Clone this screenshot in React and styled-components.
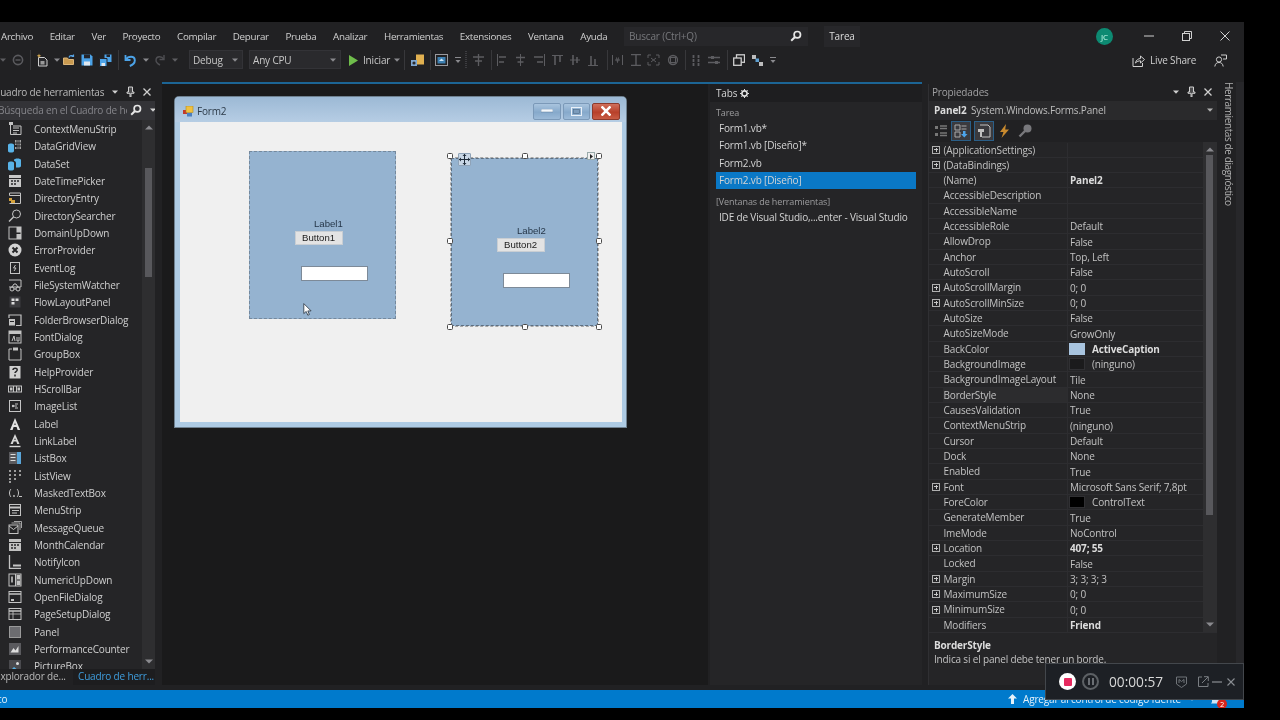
import React from 'react';
import styled, { createGlobalStyle } from 'styled-components';

const Global = createGlobalStyle`
  html, body { margin: 0; padding: 0; background: #000; }
  body { font-family: "Open Sans", "Noto Sans", sans-serif; font-size: 10px; color: #d4d4d4; }
  * { box-sizing: border-box; }
`;

const Screen = styled.div`
  position: relative; width: 1280px; height: 720px; background: #000; overflow: hidden;
  display: flex; flex-direction: column; filter: blur(0.3px);
`;
const TopGap = styled.div` height: 22px; flex: none; `;
const Win = styled.div`
  width: 1244px; height: 686px; flex: none; background: #212123;
  display: flex; flex-direction: column; letter-spacing: -0.17px;
`;

/* ---------- menu row ---------- */
const MenuRow = styled.div` height: 26px; flex: none; display: flex; align-items: center; padding-top: 2px; `;
const MenuItems = styled.div` display: flex; gap: 16.65px; padding-left: 1px; width: 624px; flex: none; font-size: 9.8px; letter-spacing: -0.3px; `;
const MenuItem = styled.span` color: #d0d0d0; white-space: nowrap; `;
const SearchBox = styled.div`
  width: 184px; height: 19px; background: #27272a; display: flex; align-items: center;
  justify-content: space-between; padding: 0 6px 0 5px; color: #77787c; flex: none;
`;
const TaskBox = styled.div`
  margin-left: 16px; width: 36px; height: 21px; background: #27272a; color: #dcdcdc;
  display: flex; align-items: center; justify-content: center; flex: none;
`;
const Avatar = styled.div`
  margin-left: 236px; width: 17px; height: 17px; border-radius: 50%; background: #0d8a72; color: #cfe;
  font-size: 8px; display: flex; align-items: center; justify-content: center; flex: none;
`;
const WinButtons = styled.div` display: flex; margin-left: 31px; gap: 28px; align-items: center; `;

/* ---------- tool row ---------- */
const ToolRow = styled.div` height: 34px; flex: none; display: flex; align-items: flex-start; padding-top: 2px; position: relative; `;
const Slot = styled.div`
  flex: none; height: 20px; margin-left: ${p => p.$ml}px; width: ${p => p.$w}px;
  display: flex; align-items: center; justify-content: center;
`;
const Sep = styled.div` flex: none; width: 1px; height: 20px; background: #38383b; margin-left: ${p => p.$ml}px; `;
const Combo = styled.div`
  flex: none; height: 19px; margin-left: ${p => p.$ml}px; width: ${p => p.$w}px;
  background: #2a2a2d; border: 1px solid #333337; display: flex; align-items: center;
  justify-content: space-between; padding: 0 4px 0 3px; color: #c8c8c8;
`;
const StartLabel = styled.span` flex: none; margin-left: ${p => p.$ml}px; width: ${p => p.$w}px; height: 20px; line-height: 20px; color: #c8c8c8; white-space: nowrap; `;
const LiveShare = styled.div`
  position: absolute; right: 0; top: 2px; height: 20px; width: 112px; display: flex; align-items: center; color: #cfcfcf;
`;
const LiveText = styled.span` margin-left: 5px; width: 49px; white-space: nowrap; `;
const LivePerson = styled.span` margin-left: 15px; display: flex; `;

/* ---------- main ---------- */
const Main = styled.div` flex: 1; min-height: 0; display: flex; padding-bottom: 5px; `;

const Toolbox = styled.section` width: 155px; flex: none; display: flex; flex-direction: column; background: #252527; margin-top: 2px; overflow: hidden; `;
const PaneTitle = styled.div`
  height: 17px; flex: none; display: flex; align-items: center; padding-bottom: 2px; background: #212123; color: #b9b9b9; overflow: hidden;
`;
const ClipLeft = styled.span` margin-left: ${p => p.$m}px; white-space: nowrap; flex: none; width: ${p => p.$w}px; overflow: hidden; `;
const PaneIcons = styled.span` display: flex; align-items: center; gap: 8px; margin-left: ${p => p.$m}px; flex: none; `;
const ToolSearch = styled.div` height: 19px; flex: none; display: flex; align-items: center; padding-bottom: 1px; background: #333337; color: #85858a; overflow: hidden; `;
const ToolBody = styled.div` flex: 1; min-height: 0; display: flex; overflow: hidden; `;
const ToolList = styled.div` flex: 1; min-width: 0; overflow: hidden; padding-top: 0.4px; `;
const ToolRowItem = styled.div` height: 17.33px; display: flex; align-items: center; padding-left: 8px; color: #cfcfcf; white-space: nowrap; `;
const ToolGlyph = styled.span` width: 14px; height: 14px; flex: none; margin-right: 12px; display: flex; `;
const Track = styled.div` width: 13px; flex: none; background: #2e2e30; display: flex; flex-direction: column; align-items: center; justify-content: space-between; padding: 5px 0; position: relative; `;
const Thumb = styled.div` position: absolute; left: 3px; width: 7px; top: ${p => p.$top}px; height: ${p => p.$h}px; background: #58585c; `;
const ToolTabs = styled.div` height: 16px; flex: none; display: flex; background: #212123; `;
const ToolTab = styled.div`
  height: 16px; line-height: 15px; flex: none; white-space: nowrap; overflow: hidden;
  width: ${p => p.$w}px; padding-left: ${p => p.$pl}px; margin-left: ${p => p.$ml}px;
  color: ${p => (p.$active ? '#3f9ede' : '#b8b8b8')}; background: ${p => (p.$active ? '#1d1d1f' : 'transparent')};
`;

const DocWell = styled.div` margin-left: 7px; width: 760px; flex: none; display: flex; border-top: 2px solid #1c6595; `;
const Designer = styled.div` position: relative; width: 546px; flex: none; background: #1a1a1b; `;

const FormWin = styled.div`
  position: absolute; left: 13px; top: 13px; width: 451px; height: 330px; border-radius: 4px 4px 0 0;
  background: #aecbe4; box-shadow: 0 0 0 1px #6f8190; display: flex; flex-direction: column; padding: 0 4px 5px 5px;
`;
const FormBar = styled.div`
  height: 25px; flex: none; margin: 0 -4px 0 -5px; padding: 3px 6px 0 8px; display: flex; align-items: center; border-radius: 4px 4px 0 0;
  background: linear-gradient(#9cb9d5, #b6cde4); color: #2c3a48;
`;
const FormTitle = styled.span` margin-left: 3px; flex: 1; font-size: 10px; `;
const Cap = styled.div`
  width: ${p => p.$w}px; height: 17px; margin-left: 2px; border-radius: 2px; display: flex; align-items: center; justify-content: center;
  border: 1px solid ${p => (p.$close ? '#8c3a2c' : '#7b99b8')};
  background: ${p => (p.$close ? 'linear-gradient(#d0705c, #b8402a 55%, #c85c44)' : 'linear-gradient(#a9c4de, #86a9cb 55%, #9cbad8)')};
`;
const Client = styled.div` flex: 1; background: #f0f0f0; position: relative; `;
const WinPanel = styled.div`
  position: absolute; left: ${p => p.$x}px; top: ${p => p.$y}px; width: ${p => p.$w}px; height: ${p => p.$h}px;
  background: #95b3d0; border: 1px dashed ${p => (p.$sel ? '#5e6f80' : '#74889c')};
  ${p => p.$sel && 'outline: 1px dashed #a8a8a8;'}
`;
const WinLabel = styled.span` position: absolute; left: ${p => p.$x}px; top: ${p => p.$y}px; color: #253648; font-family: "Liberation Sans", sans-serif; font-size: 9.6px; line-height: 12px; letter-spacing: 0; `;
const WinButton = styled.div`
  position: absolute; left: ${p => p.$x}px; top: ${p => p.$y}px; width: 48px; height: 14px; background: #e3e3e3; border: 1px solid #c9ced3;
  color: #222; font-family: "Liberation Sans", sans-serif; font-size: 9.6px; line-height: 12px; padding-left: 6px; letter-spacing: 0;
`;
const WinInput = styled.div`
  position: absolute; left: ${p => p.$x}px; top: ${p => p.$y}px; width: 67px; height: 15px; background: #fff; border: 1px solid #7d8a98;
`;
const Handle = styled.div`
  position: absolute; left: ${p => p.$x - 3}px; top: ${p => p.$y - 3}px; width: 6px; height: 6px; background: #fff; border: 1px solid #4a4a4a; border-radius: 1.5px;
`;
const MoveGlyph = styled.div`
  position: absolute; left: 278px; top: 31px; width: 13px; height: 13px; background: #c9d7e6; border: 1px solid #8fa3b8; border-radius: 1px; display: flex;
`;
const SmartTag = styled.div`
  position: absolute; left: 407px; top: 30px; width: 8px; height: 8px; background: #eee; border: 1px solid #9aa; display: flex; align-items: center; justify-content: center;
`;
const Pointer = styled.div` position: absolute; left: 123px; top: 181px; display: flex; `;

/* tabs pane */
const TabsPane = styled.section` margin-left: 2px; width: 212px; flex: none; background: #252527; display: flex; flex-direction: column; `;
const TabsHead = styled.div` height: 18px; flex: none; background: #1e1e20; display: flex; align-items: center; padding-left: 6px; gap: 3px; color: #d4d4d4; `;
const TabsBody = styled.div` padding: 4px 6px 0; display: flex; flex-direction: column; `;
const GroupHead = styled.div` height: 14px; line-height: 14px; color: #9d9d9f; font-size: 9px; margin-top: ${p => p.$mt || 0}px; letter-spacing: -0.1px; `;
const TabRow = styled.div`
  height: 17.3px; line-height: 16.5px; padding-left: 3px; white-space: nowrap; color: #d4d4d4;
  background: ${p => (p.$sel ? '#0a78c6' : 'transparent')};
`;

/* properties */
const Props = styled.section` margin-left: 6px; width: 289px; flex: none; display: flex; flex-direction: column; background: #252527; margin-top: 2px; border-left: 1px solid #303033; `;
const PropTitle = styled.div` height: 17px; flex: none; display: flex; align-items: center; padding: 0 5px 2px 3px; background: #212123; color: #a0a0a2; `;
const Grip = styled.span`
  flex: 1; height: 5px; margin: 0 8px 0 5px;
  background-image: radial-gradient(#38383b 40%, transparent 45%); background-size: 2px 2px;
`;
const PropObject = styled.div` height: 19px; flex: none; display: flex; align-items: center; padding: 0 4px 1px 5px; color: #bdbdbd; background: #2a2a2c; `;
const Bold = styled.b` font-weight: 700; color: #dcdcdc; width: 37px; flex: none; `;
const ObjectName = styled.span` flex: 1; `;
const PropTools = styled.div` height: 22px; flex: none; display: flex; align-items: center; padding-left: 2px; background: #212123; gap: 0; `;
const PropTool = styled.span`
  width: 20px; height: 20px; display: flex; align-items: center; justify-content: center; margin-right: ${p => p.$mr ?? 1}px;
  border: 1px solid ${p => (p.$on ? '#2b5f88' : 'transparent')}; background: ${p => (p.$on ? '#3a3a3e' : 'transparent')};
`;
const PropBody = styled.div` flex: 1; min-height: 0; display: flex; `;
const PropGrid = styled.div` flex: 1; min-width: 0; overflow: hidden; background: #252527; padding-top: .5px; `;
const PropRowEl = styled.div`
  height: 15.34px; display: grid; grid-template-columns: 14px 124px 1fr; align-items: center; border-bottom: 1px solid #2d2d30; color: #c2c2c2; white-space: nowrap;
  line-height: 14px;
`;
const Expander = styled.span`
  width: 8px; height: 8px; margin-left: 3px; border: 1px solid #b0b0b0; position: relative; display: block;
  &::before { content: ''; position: absolute; left: 1px; right: 1px; top: 2.5px; height: 1px; background: #c8c8c8; }
  &::after { content: ''; position: absolute; top: 1px; bottom: 1px; left: 2.5px; width: 1px; background: #c8c8c8; }
`;
const PropName = styled.span` padding-left: .5px; height: 100%; line-height: 14px; background: ${p => (p.$sel ? '#2c2c2e' : 'transparent')}; `;
const PropValue = styled.span` padding-left: 2px; display: flex; align-items: center; font-weight: ${p => (p.$b ? 700 : 400)}; color: ${p => (p.$b ? '#dcdcdc' : '#c2c2c2')}; border-left: 1px solid #2d2d30; height: 100%; `;
const Swatch = styled.i` width: 16px; height: 12px; margin: 0 7px 0 -1px; flex: none; background: ${p => p.$c}; border: 1px solid ${p => (p.$c === '#a8c4df' ? '#a8c4df' : '#303033')}; `;
const PropBar = styled.div` width: 14px; flex: none; background: #2e2e30; display: flex; flex-direction: column; align-items: center; justify-content: space-between; padding: 5px 0; position: relative; `;
const PropDesc = styled.div` height: 53px; flex: none; padding: 5px 5px 0; background: #252527; border-top: 1px solid #2d2d30; line-height: 14px; color: #c2c2c2; `;
const DescTitle = styled.div` font-weight: 700; color: #dcdcdc; `;

const Strip = styled.div` width: 27px; flex: none; display: flex; padding-left: 5px; background: #212123; box-shadow: inset -8px 0 0 #27272a; `;
const StripText = styled.span` writing-mode: vertical-rl; color: #b0b0b0; white-space: nowrap; line-height: 14px; height: 130px; letter-spacing: -0.4px; `;

/* status bar */
const Status = styled.div` height: 18px; flex: none; background: #007acc; color: #e4f1fa; display: flex; align-items: center; position: relative; overflow: hidden; `;
const StatusLeft = styled.span` margin-left: -14px; width: 1022px; flex: none; white-space: nowrap; `;
const StatusRight = styled.span` margin-left: 6px; width: 166px; flex: none; white-space: nowrap; `;
const StatusBell = styled.span` margin-left: 15px; display: flex; `;
const Badge = styled.span`
  position: absolute; right: 17px; bottom: -1px; width: 10px; height: 10px; background: #d8261c; border-radius: 50%; font-size: 7.5px; line-height: 10px; text-align: center; color: #fff;
`;

/* recorder overlay */
const Recorder = styled.div`
  position: absolute; left: 1045px; top: 663px; width: 199px; height: 37px; background: #1d2025; border: 1px solid #43474c;
  display: flex; align-items: center; padding-left: 13px; letter-spacing: 0;
`;
const RecBtn = styled.div` width: 17px; height: 17px; border-radius: 50%; background: #fff; display: flex; align-items: center; justify-content: center; flex: none; `;
const RecSquare = styled.i` width: 8px; height: 8px; background: #e62a5f; border-radius: 1px; `;
const RecPause = styled.div` margin-left: 6px; width: 17px; height: 17px; border-radius: 50%; border: 2px solid #5d6165; display: flex; align-items: center; justify-content: center; gap: 2px; flex: none; `;
const PauseBar = styled.i` width: 2px; height: 7px; background: #6b6f74; `;
const RecTime = styled.span` margin-left: 10px; width: 61px; font-size: 13.7px; color: #d9d9d9; flex: none; white-space: nowrap; `;
const RecIcons = styled.span` display: flex; align-items: center; margin-left: ${p => p.$m}px; flex: none; `;

/* ---------- icons ---------- */
const S = ({ w = 14, h = 14, vb, children, ...r }) => (
  <svg width={w} height={h} viewBox={vb || `0 0 ${w} ${h}`} fill="none" {...r}>{children}</svg>
);
const Caret = ({ c = '#8a8a8e' }) => <S w={6} h={4}><path d="M0 .5h6L3 3.8z" fill={c} /></S>;
const ScrollArrow = ({ up }) => <S w={8} h={5}><path d={up ? 'M0 4.500h8L4 .5z' : 'M0 .5h8L4 4.500z'} fill="#8a8a8e" /></S>;
const Pin = () => <S w={9} h={11}><path d="M2.5 1h4v5h1.5v1.3H5V11H4V7.3H1V6h1.5z" stroke="#d0d0d0" strokeWidth="1" fill="#d0d0d0" fillOpacity=".25" /></S>;
const XMark = ({ c = '#d0d0d0', s = 8, sw = 1.3 }) => <S w={s} h={s}><path d={`M.5.5L${s - .5} ${s - .5}M${s - .5} .5L.5 ${s - .5}`} stroke={c} strokeWidth={sw} /></S>;
const Lens = ({ c = '#e6e6e6' }) => <S w={12} h={12}><circle cx="7.3" cy="4.7" r="3.2" stroke={c} strokeWidth="1.7" /><path d="M5 7L1.2 10.8" stroke={c} strokeWidth="2" /></S>;

const dim = '#5c5c60';
const tb = {
  caret: <Caret />,
  caretDim: <Caret c="#5e5e62" />,
  back: <S w={12} h={12}><circle cx="6" cy="6" r="4.6" stroke="#5a5a5e" strokeWidth="1.6" /><path d="M3.5 6h5" stroke="#5a5a5e" strokeWidth="1.4" /></S>,
  fresh: <S w={13} h={14}><path d="M2.5 4.5h6l2.5 2.5v6h-8.5z" stroke="#cfcfcf" fill="#2a2a2d" /><path d="M3 .5l.6 1.7 1.7.6-1.7.6L3 5.1l-.6-1.7L.7 2.8l1.7-.6z" fill="#e0b050" /><rect x="4.5" y="8" width="4" height="3.5" fill="#9a9a9a" /></S>,
  open: <S w={13} h={12}><path d="M.5 10.5V4h4l1 1.5h5v5z" stroke="#dcb67a" fill="#c99a50" /><path d="M6 3.5C6.5 1.5 9 1 10.5 2M10.5 .5V2.5H8.5" stroke="#5aa5e6" strokeWidth="1.2" /></S>,
  save: <S w={12} h={12}><path d="M.5.5h9l2 2v9H.5z" fill="#4ca3e8" /><rect x="3" y=".5" width="6" height="3.8" fill="#23242a" /><rect x="3" y="7.5" width="6" height="4" fill="#dfe7ee" /></S>,
  saveAll: <S w={13} h={13}><path d="M5.5.5h7v7.5h-7z" fill="#4ca3e8" /><rect x="7.5" y=".5" width="3.5" height="2.5" fill="#23242a" /><path d="M.5 4.5h7.5v8H.5z" fill="#4ca3e8" stroke="#23242a" /><rect x="2.5" y="9" width="3.5" height="3" fill="#dfe7ee" /></S>,
  undo: <S w={12} h={13}><path d="M1.5 1v5h5" stroke="#4ca3e8" strokeWidth="1.8" fill="none" /><path d="M2 5.5C4 2 10.5 1.5 10.8 6c.2 3-2.5 5-5 6" stroke="#4ca3e8" strokeWidth="1.9" fill="none" /></S>,
  redo: <S w={10} h={12}><path d="M9 1v4.5H4.5" stroke="#4e4e52" strokeWidth="1.4" /><path d="M8.5 5C7 2 1.2 1.8 1 6c-.1 2.6 2 4 4 5" stroke="#4e4e52" strokeWidth="1.4" /></S>,
  play: <S w={9} h={11}><path d="M0 0l9 5.5L0 11z" fill="#6fbd4b" /></S>,
  attach: <S w={15} h={13}><rect x="6" y=".5" width="8" height="10" fill="#e0b050" /><path d="M1 6h6v6H1z" fill="#7ea6cf" /><circle cx="4" cy="9" r="1.6" fill="#2a2a2d" /></S>,
  form: <S w={13} h={12}><rect x=".5" y=".5" width="12" height="11" stroke="#9a9a9e" /><rect x="2.5" y="3" width="8" height="6.5" fill="#3c7fb0" /><path d="M4 7l2.5-2.5L9 7z" fill="#cfe5f5" /></S>,
  more: <S w={6} h={7}><path d="M0 .5h6" stroke="#8a8a8e" /><path d="M.5 3h5L3 6z" fill="#8a8a8e" /></S>,
  grip: <S w={3} h={18}><path d="M1 0v18" stroke="#3c3c40" strokeDasharray="1 1" strokeWidth="2" /></S>,
  a0: <S w={11} h={12}><path d="M5.5 0v12M0 3h11M2 7h7" stroke={dim} strokeWidth="1.3" /></S>,
  a1: <S w={10} h={12}><path d="M.5 0v12" stroke={dim} /><path d="M2 3h7M2 8h5" stroke={dim} strokeWidth="1.6" /></S>,
  a2: <S w={9} h={12}><path d="M4.5 0v12" stroke={dim} /><path d="M0 3.5h9M1.5 8h6" stroke={dim} strokeWidth="1.6" /></S>,
  a3: <S w={12} h={12}><path d="M11.5 0v12" stroke={dim} /><path d="M1 3h9M4 8h6" stroke={dim} strokeWidth="1.6" /></S>,
  a4: <S w={11} h={11}><path d="M0 .5h11" stroke={dim} /><path d="M3 1v9M8 1v6" stroke={dim} strokeWidth="1.6" /></S>,
  a5: <S w={10} h={10}><path d="M0 5h10" stroke={dim} /><path d="M3 0v10M7 2v6" stroke={dim} strokeWidth="1.6" /></S>,
  a6: <S w={10} h={12}><path d="M0 11.5h10" stroke={dim} /><path d="M3 2v9M7 5v6" stroke={dim} strokeWidth="1.6" /></S>,
  s0: <S w={11} h={10}><path d="M.5 0v10M10.5 0v10" stroke={dim} /><path d="M3 5h5M4.5 2.5l1 5M6.5 2.5l-1 5" stroke={dim} /></S>,
  s1: <S w={12} h={12}><path d="M1 .5h10M1 11.5h10M6 .5v11" stroke={dim} strokeWidth="1.4" /></S>,
  s2: <S w={13} h={12}><path d="M1 4V1h3M9 1h3v3M12 8v3H9M4 11H1V8" stroke={dim} /><path d="M4 4l5 4M9 4L4 8" stroke={dim} /></S>,
  s3: <S w={12} h={12}><circle cx="6" cy="6" r="4.5" stroke={dim} strokeWidth="1.3" /><rect x="3.5" y="3.5" width="5" height="5" stroke={dim} /></S>,
  g0: <S w={8} h={11}><path d="M1.5 0v11M6.5 0v11" stroke={dim} strokeWidth="1.8" strokeDasharray="3 1" /></S>,
  g1: <S w={12} h={10}><path d="M0 2.5h12M0 7.5h12" stroke={dim} strokeWidth="1.3" /><rect x="3" y="1" width="3" height="3" fill={dim} /><rect x="7" y="6" width="3" height="3" fill={dim} /></S>,
  tab: <S w={12} h={12}><rect x="3.5" y=".8" width="8" height="7.5" stroke="#cfcfcf" strokeWidth="1.3" /><rect x=".7" y="4" width="7.5" height="7.3" stroke="#cfcfcf" strokeWidth="1.3" fill="#212123" /></S>,
  order: <S w={11} h={11}><rect x="0" y="0" width="4" height="4" fill="#bdbdbd" /><rect x="3.5" y="3.5" width="3.5" height="3.5" fill="#5e9fd0" /><rect x="7" y="7" width="4" height="4" fill="#bdbdbd" /></S>,
};
const toolbarItems = [
  ['i', 'caretDim', 0, 6], ['i', 'back', 12, 12], ['s', 30], ['i', 'fresh', 36, 13], ['i', 'caret', 54, 6], ['i', 'open', 63, 13],
  ['i', 'save', 81, 12], ['i', 'saveAll', 99, 13], ['s', 118], ['i', 'undo', 124, 12], ['i', 'caret', 143, 6], ['i', 'redo', 155, 10],
  ['i', 'caretDim', 172, 6], ['c', 'Debug', 189, 54], ['c', 'Any CPU', 249, 92], ['i', 'play', 349, 9], ['t', 'Iniciar', 363, 30],
  ['i', 'caret', 394, 6], ['s', 404], ['i', 'attach', 410, 15], ['s', 430], ['i', 'form', 435, 13], ['i', 'more', 455, 6], ['i', 'grip', 465, 3],
  ['i', 'a0', 473, 11], ['s', 491], ['i', 'a1', 497, 10], ['i', 'a2', 516, 9], ['i', 'a3', 533, 12], ['i', 'a4', 552, 11], ['i', 'a5', 570, 10],
  ['i', 'a6', 588, 10], ['s', 607], ['i', 's0', 612, 11], ['i', 's1', 630, 12], ['i', 's2', 647, 13], ['i', 's3', 667, 12], ['s', 685],
  ['i', 'g0', 692, 8], ['i', 'g1', 708, 12], ['s', 727], ['i', 'tab', 733, 12], ['i', 'order', 752, 11], ['i', 'more', 770, 6],
];
function Toolbar() {
  let right = 0;
  const out = [];
  toolbarItems.forEach((it, n) => {
    const kind = it[0];
    if (kind === 's') { out.push(<Sep key={n} $ml={it[1] - right} />); right = it[1] + 1; return; }
    const left = it[2]; const w = it[3]; const ml = left - right;
    if (kind === 'i') out.push(<Slot key={n} $ml={ml} $w={w}>{tb[it[1]]}</Slot>);
    if (kind === 'c') out.push(<Combo key={n} $ml={ml} $w={w}><span>{it[1]}</span><Caret /></Combo>);
    if (kind === 't') out.push(<StartLabel key={n} $ml={ml} $w={w}>{it[1]}</StartLabel>);
    right = left + w;
  });
  return out;
}

const g = '#c4c4c4';
const B = ({ children }) => <S w={14} h={14}>{children}</S>;
const glyphs = {
  ContextMenuStrip: <B><path d="M2.5 2v10.5H13V4H5" stroke={g} /><path d="M5 6h6M5 8.5h6M5 11h4" stroke={g} /><rect x="1" y="0" width="4" height="3" fill={g} /></B>,
  DataGridView: <B><path d="M0 6c0-2 6-2 6 0v6c0 2-6 2-6 0z" fill="#58b3e8" /><path d="M7 1h6v9H7V8h2V6H7z" fill="#d8d8d8" fillOpacity=".7" /><path d="M9 1v9M11 1v9M7 4h6M7 7h6" stroke="#252527" /></B>,
  DataSet: <B><path d="M0 6c0-2 6-2 6 0v6c0 2-6 2-6 0z" fill="#58b3e8" /><path d="M6 3c0-2 7-2 7 0v6c0 1.5-3 1.8-5 1.5V6c0-1-1-2-2-2.2z" fill="#58b3e8" /></B>,
  DateTimePicker: <B><rect x="1" y="1" width="12" height="12" fill="#c8c8c8" /><path d="M1 4.5h12" stroke="#252527" /><path d="M3 7h2M6 7h2M9 7h2M3 10h2M6 10h2" stroke="#252527" strokeWidth="1.4" /></B>,
  DirectoryEntry: <B><path d="M1.5 2h11v10.5H1.5" stroke={g} /><path d="M1.5 2v2.5h11" stroke={g} /><path d="M1 7h3v2h3v3H3v-2H1z" fill="#d5a23c" /></B>,
  DirectorySearcher: <B><circle cx="8.5" cy="5" r="4" stroke={g} /><path d="M5.5 8L1 12.5" stroke={g} strokeWidth="1.5" /></B>,
  DomainUpDown: <B><rect x="1" y="1" width="12" height="12" stroke={g} /><rect x="8.5" y="1" width="4.5" height="5.5" fill={g} /><rect x="8.5" y="8" width="4.5" height="5" fill={g} /></B>,
  ErrorProvider: <B><circle cx="7" cy="7" r="6.5" fill="#d2d2d2" /><path d="M4.5 4.5l5 5M9.5 4.5l-5 5" stroke="#252527" strokeWidth="2" /></B>,
  EventLog: <B><rect x="2.5" y="1.5" width="9" height="11" stroke={g} /><path d="M7.5 4L5.5 7H8l-2 3" stroke={g} /></B>,
  FileSystemWatcher: <B><path d="M1 2h12v7H1" stroke={g} /><circle cx="4" cy="11" r="2" stroke={g} /><circle cx="10" cy="11" r="2" stroke={g} /><path d="M6 11h2M4 9l2-3h2l2 3" stroke={g} /></B>,
  FlowLayoutPanel: <B><rect x="1.5" y="1.5" width="11" height="11" fill="#3d3d40" /><rect x="3.5" y="3.5" width="3" height="2.5" fill="#ddd" /><rect x="7.5" y="3.5" width="3" height="2.5" fill="#ddd" /><rect x="3.5" y="7" width="3" height="2.5" fill="#ddd" /></B>,
  FolderBrowserDialog: <B><path d="M1 5V2h12v10.5H8" stroke={g} strokeWidth="1.2" /><path d="M1 6h6v6.5H1z" fill={g} /><path d="M2 8.5h4" stroke="#252527" /></B>,
  FontDialog: <B><rect x="1" y="1" width="12" height="12" stroke={g} /><rect x="1" y="1" width="12" height="3" fill={g} /><path d="M4 11l2-5 1 5M9 7v4h2V7" stroke={g} /></B>,
  GroupBox: <B><path d="M4 2H1v11h12V2h-1" stroke={g} /><path d="M5 .5h5v3H5z" fill={g} /></B>,
  HelpProvider: <B><rect x="1.5" y="1" width="11" height="12.5" fill="#d0d0d0" /><path d="M5 5c0-2.5 4.5-2.5 4.2 0 0 1.5-2.2 1.6-2.2 3M7 9.5v2" stroke="#252527" strokeWidth="1.5" /></B>,
  HScrollBar: <B><rect x="0.5" y="4" width="13" height="6" stroke={g} /><rect x="2" y="5.5" width="2.5" height="3" fill={g} /><rect x="9.5" y="5.5" width="2.5" height="3" fill={g} /><path d="M5.5 4v6M8.5 4v6" stroke={g} /></B>,
  ImageList: <B><rect x="1.5" y="1.5" width="11" height="11" stroke={g} /><circle cx="5" cy="7" r="1.2" fill={g} /><path d="M7 5h3M7 9h3M6 7h3" stroke={g} /></B>,
  Label: <B><path d="M7 1l-5 12h2.6l1-3h3l1 3h2.6zM6.3 8L7 5.5 7.7 8z" fill="#e2e2e2" /></B>,
  LinkLabel: <B><path d="M7 0l-4.5 10h2.3l.9-2.5h2.6l.9 2.5h2.3zM6.3 6L7 4l.7 2z" fill="#d8d8d8" /><path d="M1.5 12.5h11" stroke="#d8d8d8" strokeWidth="1.4" /></B>,
  ListBox: <B><rect x="1" y="1" width="12" height="12" fill="#5a5a5e" /><path d="M2.5 3.5h5M2.5 6.5h5M2.5 9.5h5" stroke="#ddd" /><rect x="9" y="1" width="4" height="12" fill="#5aa5d8" /></B>,
  ListView: <B><path d="M1 2h3M6 2h3M11 2h2M1 6h3M6 6h3M11 6h2M1 10h3M6 10h3M1 13h3" stroke={g} strokeWidth="1.6" strokeDasharray="2 1" /></B>,
  MaskedTextBox: <B><path d="M3 3C1 5 1 9 3 11M9 3c2 2 2 6 0 8" stroke={g} /><circle cx="6" cy="10" r=".9" fill={g} /><path d="M11 10.5h3" stroke={g} /></B>,
  MenuStrip: <B><rect x="1.5" y="1.5" width="11" height="11" stroke={g} /><path d="M1.5 4.5h11" stroke={g} strokeWidth="2" /><path d="M4 7.5h7M4 10h5" stroke={g} /></B>,
  MessageQueue: <B><rect x="1" y="4" width="9" height="8.5" stroke={g} /><path d="M1 5l4.5 3.5L10 5" stroke={g} /><path d="M3.5 2h8.5v7M6 0.5h7.5V7" stroke={g} strokeWidth=".8" /></B>,
  MonthCalendar: <B><rect x="1" y="1" width="12" height="12" fill="#c0c0c0" /><path d="M1 4.5h12" stroke="#252527" /><path d="M3 7h2M6 7h2M9 7h2M3 10h2M6 10h2" stroke="#252527" strokeWidth="1.4" /></B>,
  NotifyIcon: <B><path d="M1.5 0v13.5H13" stroke={g} strokeWidth="1.3" /><rect x="5" y="9.5" width="8" height="2" fill={g} /></B>,
  NumericUpDown: <B><rect x="1" y="1" width="12" height="12" stroke={g} /><path d="M7.5 1v12M7.5 7h5.5" stroke={g} /><path d="M4 3.5v6" stroke={g} strokeWidth="1.6" /><rect x="8.5" y="2" width="4" height="4" fill={g} /><rect x="8.5" y="8" width="4" height="4" fill={g} /></B>,
  OpenFileDialog: <B><rect x="1" y="1.5" width="12" height="11" stroke={g} /><path d="M1 4h12" stroke={g} strokeWidth="1.5" /><path d="M3 9h3v2H3z" fill={g} /></B>,
  PageSetupDialog: <B><rect x="1" y="1.5" width="12" height="11" stroke={g} /><path d="M1 4h12" stroke={g} strokeWidth="1.5" /><path d="M1 7h12M5 4v8" stroke={g} strokeWidth=".8" /></B>,
  Panel: <B><rect x="1.5" y="1.5" width="11" height="11" fill="#6c6c70" stroke="#9a9a9a" /></B>,
  PerformanceCounter: <B><rect x="1" y="1" width="12" height="12" fill="#5a5a5e" /><path d="M2.5 10.5L5.5 6l2 2.5 3-4.5v6.5z" fill="#ddd" /></B>,
  PictureBox: <B><rect x="1" y="1" width="12" height="12" fill="#4a4a4e" /><path d="M2 12l4-4 5 4z" fill="#58b3e8" /><circle cx="9.5" cy="4.5" r="1.5" fill="#ddd" /></B>,
};
const tools = Object.keys(glyphs);

const props = [
  ['(ApplicationSettings)', '', 1], ['(DataBindings)', '', 1], ['(Name)', 'Panel2', 0, 'b'], ['AccessibleDescription', ''], ['AccessibleName', ''],
  ['AccessibleRole', 'Default'], ['AllowDrop', 'False'], ['Anchor', 'Top, Left'], ['AutoScroll', 'False'], ['AutoScrollMargin', '0; 0', 1],
  ['AutoScrollMinSize', '0; 0', 1], ['AutoSize', 'False'], ['AutoSizeMode', 'GrowOnly'], ['BackColor', 'ActiveCaption', 0, 'b', '#a8c4df'],
  ['BackgroundImage', '(ninguno)', 0, '', '#1b1b1c'], ['BackgroundImageLayout', 'Tile'], ['BorderStyle', 'None', 0, 'sel'], ['CausesValidation', 'True'],
  ['ContextMenuStrip', '(ninguno)'], ['Cursor', 'Default'], ['Dock', 'None'], ['Enabled', 'True'], ['Font', 'Microsoft Sans Serif; 7,8pt', 1],
  ['ForeColor', 'ControlText', 0, '', '#000'], ['GenerateMember', 'True'], ['ImeMode', 'NoControl'], ['Location', '407; 55', 1, 'b'], ['Locked', 'False'],
  ['Margin', '3; 3; 3; 3', 1], ['MaximumSize', '0; 0', 1], ['MinimumSize', '0; 0', 1], ['Modifiers', 'Friend', 0, 'b'],
];
const menu = ['Archivo', 'Editar', 'Ver', 'Proyecto', 'Compilar', 'Depurar', 'Prueba', 'Analizar', 'Herramientas', 'Extensiones', 'Ventana', 'Ayuda'];
const handles = [[270, 34], [345, 34], [419, 34], [270, 119], [419, 119], [270, 205], [345, 205], [419, 205]];

function FormDesigner() {
  return (
    <FormWin>
      <FormBar>
        <S w={11} h={11}><rect x="0" y="4" width="4" height="4" fill="#c0392b" /><rect x="3" y="0" width="7" height="6.5" fill="#f0c040" stroke="#b08a20" strokeWidth=".6" /><rect x="4" y="7" width="5" height="3.5" fill="#4a7fc0" /></S>
        <FormTitle>Form2</FormTitle>
        <Cap $w={28}><S w={12} h={4}><rect width="12" height="3" fill="#f4f8fc" stroke="#5d7c9a" strokeWidth=".5" /></S></Cap>
        <Cap $w={27}><S w={11} h={9}><rect x=".5" y=".5" width="10" height="8" stroke="#e8f0f8" fill="none" /><rect x="2.5" y="2.5" width="6" height="4" fill="#7c9cbc" stroke="#4e6a86" strokeWidth=".6" /></S></Cap>
        <Cap $w={28} $close><XMark c="#fff" s={10} sw={2.6} /></Cap>
      </FormBar>
      <Client>
        <WinPanel $x={69} $y={29} $w={147} $h={168}>
          <WinLabel $x={64} $y={65.5}>Label1</WinLabel>
          <WinButton $x={45} $y={79}>Button1</WinButton>
          <WinInput $x={51} $y={114} />
        </WinPanel>
        <WinPanel $sel $x={271} $y={36} $w={147} $h={168}>
          <WinLabel $x={65} $y={65.5}>Label2</WinLabel>
          <WinButton $x={45} $y={79}>Button2</WinButton>
          <WinInput $x={51} $y={114} />
        </WinPanel>
        {handles.map(([x, y]) => <Handle key={`${x}-${y}`} $x={x} $y={y} />)}
        <MoveGlyph>
          <S w={11} h={11}><path d="M5.5 0v11M0 5.5h11" stroke="#1f2c3a" /><path d="M5.5 0l-2 2h4zM5.5 11l-2-2h4zM0 5.5l2-2v4zM11 5.5l-2-2v4z" fill="#1f2c3a" /></S>
        </MoveGlyph>
        <SmartTag><S w={3} h={5}><path d="M0 0l3 2.5L0 5z" fill="#222" /></S></SmartTag>
        <Pointer>
          <S w={9} h={13}><path d="M.8.6v10l2.4-2.2 1.6 3.8 1.6-.7-1.6-3.6h3.3z" fill="#fff" stroke="#24303c" strokeWidth=".8" /></S>
        </Pointer>
      </Client>
    </FormWin>
  );
}

export default function App() {
  return (
    <>
      <Global />
      <Screen>
        <TopGap />
        <Win>
          <MenuRow>
            <MenuItems>{menu.map(m => <MenuItem key={m}>{m}</MenuItem>)}</MenuItems>
            <SearchBox><span>Buscar (Ctrl+Q)</span><Lens /></SearchBox>
            <TaskBox>Tarea</TaskBox>
            <Avatar>JC</Avatar>
            <WinButtons>
              <S w={10} h={10}><path d="M0 5h10" stroke="#d0d0d0" /></S>
              <S w={10} h={10}><rect x=".5" y="2.5" width="7" height="7" stroke="#d0d0d0" /><path d="M2.5 2.5v-2h7v7h-2" stroke="#d0d0d0" /></S>
              <S w={10} h={10}><path d="M.5.5l9 9M9.5.5l-9 9" stroke="#d0d0d0" /></S>
            </WinButtons>
          </MenuRow>
          <ToolRow>
            <Toolbar />
            <LiveShare>
              <S w={13} h={13}><path d="M1 4v8.5h9.5V9" stroke="#cfcfcf" /><path d="M3.5 9C4 6 6.5 4.5 8.5 4.5V2L12.5 5.5 8.5 9V6.8C6.5 6.8 5 7.5 3.5 9z" stroke="#cfcfcf" /></S>
              <LiveText>Live Share</LiveText>
              <LivePerson>
                <S w={13} h={13}><circle cx="5" cy="5.5" r="2.6" stroke="#cfcfcf" /><path d="M.8 12.5c.5-3 2-4 4.2-4s3.700 1 4.200 4" stroke="#cfcfcf" /><path d="M7 1h5.500v4H9" stroke="#cfcfcf" /></S>
              </LivePerson>
            </LiveShare>
          </ToolRow>
          <Main>
            <Toolbox>
              <PaneTitle>
                <ClipLeft $m={-6} $w={118}>Cuadro de herramientas</ClipLeft>
                <PaneIcons $m={0}><Caret c="#d0d0d0" /><Pin /><XMark /></PaneIcons>
              </PaneTitle>
              <ToolSearch>
                <ClipLeft $m={-2} $w={129}>Búsqueda en el Cuadro de herr</ClipLeft>
                <PaneIcons $m={3}><Lens /><Caret c="#d0d0d0" /></PaneIcons>
              </ToolSearch>
              <ToolBody>
                <ToolList>
                  {tools.map(t => <ToolRowItem key={t}><ToolGlyph>{glyphs[t]}</ToolGlyph>{t}</ToolRowItem>)}
                </ToolList>
                <Track>
                  <ScrollArrow up />
                  <Thumb $top={48} $h={109} />
                  <ScrollArrow />
                </Track>
              </ToolBody>
              <ToolTabs>
                <ToolTab $w={73} $pl={0} $ml={-5}>Explorador de...</ToolTab>
                <ToolTab $active $w={83} $pl={5} $ml={5}>Cuadro de herr...</ToolTab>
              </ToolTabs>
            </Toolbox>
            <DocWell>
              <Designer><FormDesigner /></Designer>
              <TabsPane>
                <TabsHead>
                  Tabs
                  <S w={9} h={9}><circle cx="4.5" cy="4.5" r="2.6" stroke="#e0e0e0" strokeWidth="1.6" /><path d="M4.5 0v1.500M4.500 7.500V9M0 4.500h1.500M7.500 4.500H9M1.300 1.300l1 1M6.700 6.700l1 1M1.300 7.700l1-1M6.700 2.300l1-1" stroke="#e0e0e0" /></S>
                </TabsHead>
                <TabsBody>
                  <GroupHead>Tarea</GroupHead>
                  <TabRow>Form1.vb*</TabRow>
                  <TabRow>Form1.vb [Diseño]*</TabRow>
                  <TabRow>Form2.vb</TabRow>
                  <TabRow $sel>Form2.vb [Diseño]</TabRow>
                  <GroupHead $mt={6}>[Ventanas de herramientas]</GroupHead>
                  <TabRow>IDE de Visual Studio,...enter - Visual Studio</TabRow>
                </TabsBody>
              </TabsPane>
            </DocWell>
            <Props>
              <PropTitle>
                Propiedades<Grip />
                <PaneIcons $m={0}><Caret c="#d0d0d0" /><Pin /><XMark /></PaneIcons>
              </PropTitle>
              <PropObject>
                <Bold>Panel2</Bold><ObjectName>System.Windows.Forms.Panel</ObjectName><Caret c="#b0b0b0" />
              </PropObject>
              <PropTools>
                <PropTool $mr={0}><S w={12} h={12}><path d="M0 1h3v3H0zM0 8h3v3H0z" fill="#777" /><path d="M5 1h7M5 3.500h7M5 8h7M5 10.500h7" stroke="#777" strokeWidth="1.400" /></S></PropTool>
                <PropTool $on $mr={3}><S w={14} h={14}><path d="M1 1h5v5H1zM1 8h5v5H1z" stroke="#aaa" /><path d="M7.500 2h5M7.500 5h5" stroke="#aaa" /><path d="M9 7h2.500v3H13.500L10.300 13.500 7 10h2z" fill="#4ca3e8" /></S></PropTool>
                <PropTool $on $mr={0}><S w={14} h={14}><path d="M3 1h8l2 2v10H5" stroke="#c0c0c0" /><path d="M1 5h6v3H5v5H3V8H1z" fill="#c0c0c0" /></S></PropTool>
                <PropTool><S w={11} h={14}><path d="M7 0L1 8h3.500L2.500 14 10 5.500H6.200z" fill="#c98a2e" /></S></PropTool>
                <PropTool $mr={0}><S w={14} h={14}><circle cx="9.500" cy="4.500" r="4" fill="#78787c" /><path d="M7 7L1.500 12.500" stroke="#78787c" strokeWidth="2.400" /></S></PropTool>
              </PropTools>
              <PropBody>
                <PropGrid>
                  {props.map(([n, v, ex, mode, sw]) => (
                    <PropRowEl key={n}>
                      {ex ? <Expander /> : <span />}
                      <PropName $sel={mode === 'sel'}>{n}</PropName>
                      <PropValue $b={mode === 'b'}>{sw && <Swatch $c={sw} />}{v}</PropValue>
                    </PropRowEl>
                  ))}
                </PropGrid>
                <PropBar>
                  <ScrollArrow up />
                  <Thumb $top={13} $h={360} />
                  <ScrollArrow />
                </PropBar>
              </PropBody>
              <PropDesc>
                <DescTitle>BorderStyle</DescTitle>
                Indica si el panel debe tener un borde.
              </PropDesc>
            </Props>
            <Strip><StripText>Herramientas de diagnóstico</StripText></Strip>
          </Main>
          <Status>
            <StatusLeft>Listo</StatusLeft>
            <S w={9} h={10}><path d="M4.500 0L9 4.500H6V10H3V4.500H0z" fill="#e4f1fa" /></S>
            <StatusRight>Agregar al control de código fuente</StatusRight>
            <Caret c="#cfe5f5" />
            <StatusBell><S w={11} h={11}><path d="M2 8V5c0-4 7-4 7 0v3l1 1.500H1z" fill="#cfe5f5" /></S></StatusBell>
            <Badge>2</Badge>
          </Status>
        </Win>
        <Recorder>
          <RecBtn><RecSquare /></RecBtn>
          <RecPause><PauseBar /><PauseBar /></RecPause>
          <RecTime>00:00:57</RecTime>
          <RecIcons $m={6}><S w={11} h={12}><path d="M.5 1h10v7L5.500 11.500.5 8z" stroke="#6f7378" /><path d="M3 7V3.500l2.500 2 2.500-2V7" stroke="#6f7378" /></S></RecIcons>
          <RecIcons $m={11}><S w={11} h={11}><path d="M4 1H.5v9.500H10V7" stroke="#7a7e83" /><path d="M4 7L10 1M6 .700h4.300V5" stroke="#7a7e83" /></S></RecIcons>
          <RecIcons $m={3}><S w={10} h={10}><path d="M0 5h10" stroke="#8a8e93" strokeWidth="1.200" /></S></RecIcons>
          <RecIcons $m={5}><XMark c="#8a8e93" s={8} sw={1.100} /></RecIcons>
        </Recorder>
      </Screen>
    </>
  );
}
